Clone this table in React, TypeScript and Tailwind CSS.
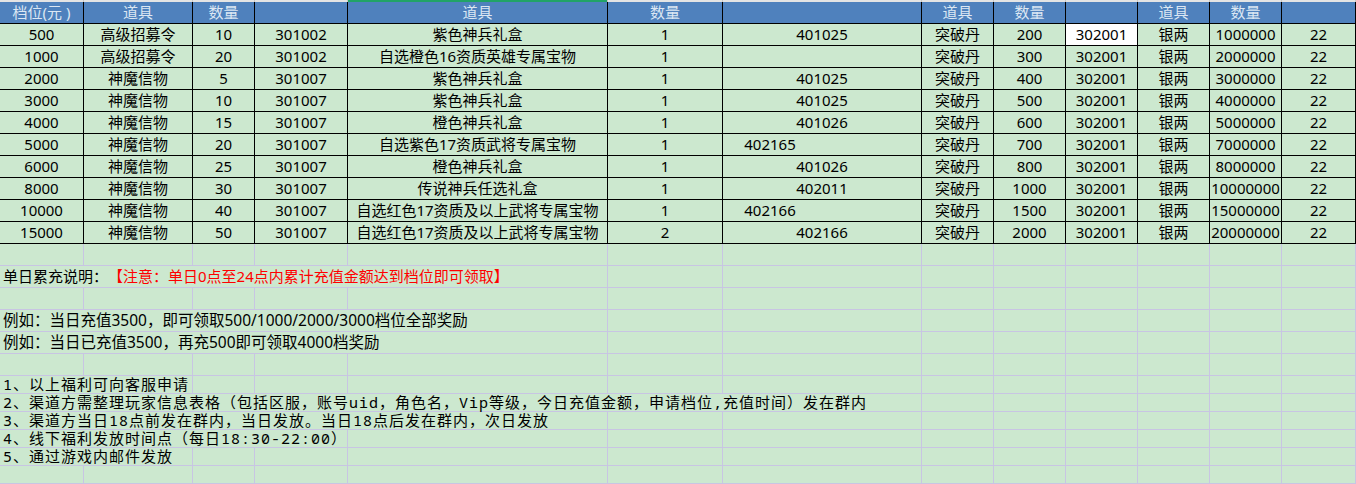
import React from 'react'

const grid =
  'grid grid-cols-[84px_109px_62px_93px_260px_115px_199px_72px_72px_72px_72px_72px_74px]'

const headers = ['档位(元 )', '道具', '数量', '', '道具', '数量', '', '道具', '数量', '', '道具', '数量', '']

type Row = {
  tier: string
  item: string
  qty: string
  id1: string
  reward: string
  count: string
  id2: string
  shiftId2?: boolean
  dan: string
  silver: string
}

const rows: Row[] = [
  { tier: '500', item: '高级招募令', qty: '10', id1: '301002', reward: '紫色神兵礼盒', count: '1', id2: '401025', dan: '200', silver: '1000000' },
  { tier: '1000', item: '高级招募令', qty: '20', id1: '301002', reward: '自选橙色16资质英雄专属宝物', count: '1', id2: '', dan: '300', silver: '2000000' },
  { tier: '2000', item: '神魔信物', qty: '5', id1: '301007', reward: '紫色神兵礼盒', count: '1', id2: '401025', dan: '400', silver: '3000000' },
  { tier: '3000', item: '神魔信物', qty: '10', id1: '301007', reward: '紫色神兵礼盒', count: '1', id2: '401025', dan: '500', silver: '4000000' },
  { tier: '4000', item: '神魔信物', qty: '15', id1: '301007', reward: '橙色神兵礼盒', count: '1', id2: '401026', dan: '600', silver: '5000000' },
  { tier: '5000', item: '神魔信物', qty: '20', id1: '301007', reward: '自选紫色17资质武将专属宝物', count: '1', id2: '402165', shiftId2: true, dan: '700', silver: '7000000' },
  { tier: '6000', item: '神魔信物', qty: '25', id1: '301007', reward: '橙色神兵礼盒', count: '1', id2: '401026', dan: '800', silver: '8000000' },
  { tier: '8000', item: '神魔信物', qty: '30', id1: '301007', reward: '传说神兵任选礼盒', count: '1', id2: '402011', dan: '1000', silver: '10000000' },
  { tier: '10000', item: '神魔信物', qty: '40', id1: '301007', reward: '自选红色17资质及以上武将专属宝物', count: '1', id2: '402166', shiftId2: true, dan: '1500', silver: '15000000' },
  { tier: '15000', item: '神魔信物', qty: '50', id1: '301007', reward: '自选红色17资质及以上武将专属宝物', count: '2', id2: '402166', dan: '2000', silver: '20000000' },
]

// lower sheet area: text, columns the overflowing text covers, row height, text style
type Note = { text?: React.ReactNode; span: number; tall: boolean; style?: string }

const mono = "font-['Noto_Sans_Mono','Noto_Sans_CJK_SC',monospace] text-[15px] tracking-[1px]"

const notes: Note[] = [
  { span: 1, tall: true },
  {
    text: (
      <>
        单日累充说明：<span className="text-[#ff0000]">【注意：单日0点至24点内累计充值金额达到档位即可领取】</span>
      </>
    ),
    span: 5,
    tall: true,
    style: 'text-[15px]',
  },
  { span: 1, tall: true },
  { text: '例如：当日充值3500，即可领取500/1000/2000/3000档位全部奖励', span: 5, tall: true, style: 'text-[15.5px]' },
  { text: '例如：当日已充值3500，再充500即可领取4000档奖励', span: 5, tall: true, style: 'text-[15.5px]' },
  { span: 1, tall: true },
  { text: '1、以上福利可向客服申请', span: 2, tall: false, style: mono },
  { text: '2、渠道方需整理玩家信息表格（包括区服，账号uid，角色名，Vip等级，今日充值金额，申请档位,充值时间）发在群内', span: 7, tall: false, style: mono },
  { text: '3、渠道方当日18点前发在群内，当日发放。当日18点后发在群内，次日发放', span: 5, tall: false, style: mono },
  { text: '4、线下福利发放时间点（每日18:30-22:00）', span: 4, tall: false, style: mono },
  { text: '5、通过游戏内邮件发放', span: 2, tall: false, style: mono },
  { span: 1, tall: false },
]

const spanClass: Record<number, string> = {
  1: 'col-span-1',
  2: 'col-span-2',
  4: 'col-span-4',
  5: 'col-span-5',
  7: 'col-span-7',
}

function DataCell({ children, white, className = '' }: { children?: React.ReactNode; white?: boolean; className?: string }) {
  return (
    <div
      className={`flex items-center justify-center whitespace-nowrap border-r border-b border-black ${
        white ? 'bg-white' : ''
      } ${className}`}
    >
      {children}
    </div>
  )
}

export default function App() {
  return (
    <div className="h-[484px] w-[1356px] overflow-hidden bg-[#cce8cf] font-['Noto_Sans','Noto_Sans_CJK_SC',sans-serif] text-[15px] leading-none text-black">
      {/* strip of the hidden row above, with the column selection marker */}
      <div className={`${grid} h-[2px]`}>
        {headers.map((_, i) => (
          <div key={i} className={`border-r border-[#c8c8c8] ${i === 4 ? 'bg-[#21a366]' : 'bg-[#e4e4e4]'}`} />
        ))}
      </div>

      <div className={`${grid} h-[22px] bg-[#4f81bd] text-[#dce7f3]`}>
        {headers.map((h, i) => (
          <DataCell key={i}>{h}</DataCell>
        ))}
      </div>

      {rows.map((r, i) => (
        <div key={r.tier} className={`${grid} h-[22px]`}>
          <DataCell>{r.tier}</DataCell>
          <DataCell>{r.item}</DataCell>
          <DataCell>{r.qty}</DataCell>
          <DataCell>{r.id1}</DataCell>
          <DataCell>{r.reward}</DataCell>
          <DataCell>{r.count}</DataCell>
          <DataCell className={r.shiftId2 ? 'pr-[104px]' : ''}>{r.id2}</DataCell>
          <DataCell>突破丹</DataCell>
          <DataCell>{r.dan}</DataCell>
          <DataCell white={i === 0}>302001</DataCell>
          <DataCell>银两</DataCell>
          <DataCell>{r.silver}</DataCell>
          <DataCell>22</DataCell>
        </div>
      ))}

      {notes.map((n, i) => (
        <div key={i} className={`${grid} ${n.tall ? 'h-[22px]' : 'h-[18px]'}`}>
          <div
            className={`${spanClass[n.span]} flex items-center whitespace-nowrap border-r border-b border-[#c8c5e3] pl-[3px] ${
              n.style ?? ''
            }`}
          >
            {n.text}
          </div>
          {Array.from({ length: 13 - n.span }).map((_, j) => (
            <div key={j} className="border-r border-b border-[#c8c5e3]" />
          ))}
        </div>
      ))}
    </div>
  )
}
